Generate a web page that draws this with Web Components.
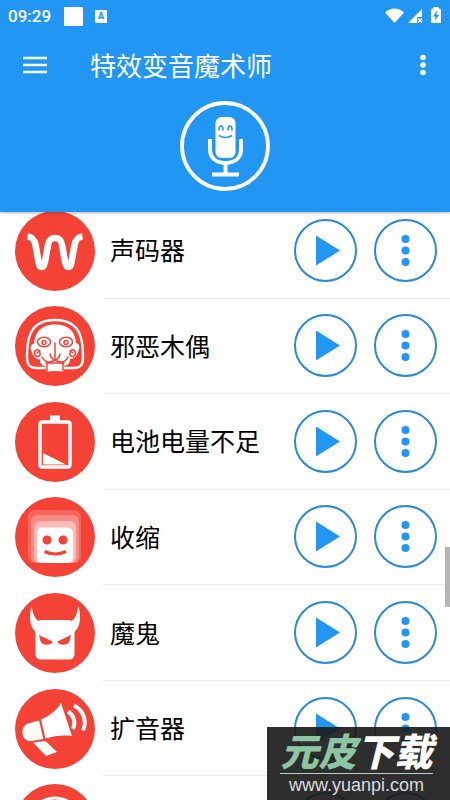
<!DOCTYPE html>
<html lang="zh-CN">
<head>
<meta charset="utf-8">
<meta name="viewport" content="width=device-width, initial-scale=1">
<title>特效变音魔术师</title>
<style>
  body {
    margin: 0;
    background: #fff;
    font-family: Roboto, "Noto Sans CJK SC", sans-serif;
    --blue: #2196f3;
    --ring: #2b88dc;
    --red: #f44336;
  }
</style>
</head>
<body>
<voice-app>
  <status-bar slot="header" time="09:29"></status-bar>
  <app-toolbar slot="header">特效变音魔术师</app-toolbar>
  <mic-hero slot="header"></mic-hero>
  <voice-row icon="vocoder">声码器</voice-row>
  <voice-row icon="puppet">邪恶木偶</voice-row>
  <voice-row icon="battery">电池电量不足</voice-row>
  <voice-row icon="shrink">收缩</voice-row>
  <voice-row icon="devil">魔鬼</voice-row>
  <voice-row icon="megaphone">扩音器</voice-row>
  <voice-row icon="ring"></voice-row>
  <site-badge slot="overlay" href="http://www.yuanpi.com">
    <span slot="lead">元皮</span><span slot="tail">下载</span>
    <span slot="url">www.yuanpi.com</span>
  </site-badge>
</voice-app>

<script>
const ICONS = {
  vocoder: `<path d="M12.500 25.500C18 26 19.500 29 20.500 34l2.500 14c1 6 1.500 8 3.500 8s3-2 4-8l2.500-14c1-5.500 3-7 7-7s6 1.500 7 7l2.500 14c1 6 2 8 4 8s2.500-2 3.500-8l2.500-14c1-5 2.500-8 8-8.500" fill="none" stroke="#fff" stroke-width="6.600"/>`,
  puppet: `<path d="M31 62H21c-6 0-9-4-9-10 0-7 0-13 2-20 3-12 12-18 26-18s23 6 26 18c2 7 2 13 2 20 0 6-3 10-9 10H49" fill="none" stroke="#fff" stroke-width="2.400"/>
    <path d="M40 18.500c-13 0-20 7-21 19-4 1-4 5-2 9 1 4 4 7 8 7 0 3 1 6 6 7v5.500q9-2 18 0V60c5-1 6-4 6-7 4 0 7-3 8-7 2-4 2-8-2-9-1-12-8-18.500-21-18.500z" fill="#fff"/>
    <g fill="none" stroke="var(--red)" stroke-width="1.500" stroke-linecap="round">
      <ellipse cx="29" cy="36" rx="6.500" ry="4.800"/><ellipse cx="51" cy="36" rx="6.500" ry="4.800"/>
      <circle cx="29" cy="36.500" r="2"/><circle cx="51" cy="36.500" r="2"/>
      <path d="M40 37v16M35 48c0 3 2 4 4 6M45 48c0 3-2 4-4 6M27 51c3 6 8 6 13 3 5 3 10 3 13-3M32 57v9M48 57v9M31 57h18"/>
      <path d="M25 45c-3-3-7 0-5 4 2 3 6 1 5-2-1-2-3-1-3 0M55 45c3-3 7 0 5 4-2 3-6 1-5-2 1-2 3-1 3 0"/>
    </g>`,
  battery: `<rect x="25" y="20" width="30" height="45" rx="2" fill="none" stroke="#fff" stroke-width="3.400"/>
    <path d="M35 19v-5.500h10V19zM28 51l23 11.500H28z" fill="#fff"/>`,
  shrink: `<g fill="#fff"><rect x="13" y="13" width="53" height="53" rx="7" opacity=".18"/>
    <rect x="16" y="18" width="48" height="48" rx="6" opacity=".25"/>
    <rect x="19" y="24" width="42" height="42" rx="6" opacity=".42"/>
    <rect x="22" y="30.500" width="36" height="35.500" rx="5"/></g>
    <g fill="var(--red)"><circle cx="32" cy="43" r="4.500"/><circle cx="48" cy="43" r="4.500"/></g>
    <path d="M29.500 54.500q10.500 5 21.500 0" fill="none" stroke="var(--red)" stroke-width="3.200"/>`,
  devil: `<path d="M16.500 13C14 23 14 33 20.500 39v22q0 5.500 5.500 5.500h28q5.500 0 5.500-5.500V39C66 33 66 23 63.500 13 62 21 60 26 56.500 28q-1-1-4-1h-25q-3 0-4 1C20 26 18 21 16.500 13z" fill="#fff"/>
    <path d="M24 42l13.500 6.500c-1 4-10 5-12-.500zM56 42l-13.500 6.500c1 4 10 5 12-.500z" fill="var(--red)"/>`,
  megaphone: `<path d="M24 31.500l4.300 18.500-12 2c-10 1-12-14-3.500-17.500zM26 30.500C34 27 40 23 46 14l11 33c-9-1-18 0-26.500 2.500zM18 53.500L30.500 52 42 63l-11 4z" fill="#fff"/>
    <path d="M53 22.500c6 4 8 11 5 17.500M59 16.500c10 5 13 16 9 25" fill="none" stroke="#fff" stroke-width="4"/>`,
  ring: `<circle cx="40" cy="40" r="26" fill="none" stroke="#fff" stroke-width="3"/>`
};

function define(name, markup, setup) {
  const template = document.createElement('template');
  template.innerHTML = markup;
  customElements.define(name, class extends HTMLElement {
    constructor() {
      super();
      this.attachShadow({ mode: 'open' }).append(template.content.cloneNode(true));
    }
    connectedCallback() { if (setup) setup(this, this.shadowRoot); }
  });
}

define('voice-app', `
  <style>
    :host { display: flex; flex-direction: column; height: 100vh; position: relative; overflow: hidden; }
    header { background: var(--blue); color: #fff; box-shadow: 0 1px 3px rgba(0,0,0,.3); z-index: 1; }
    main { flex: 1; min-height: 0; overflow: hidden; position: relative; }
    .list { display: grid; grid-auto-rows: 1fr; height: calc(100% + 81px); margin-top: -9px; }
    .thumb { position: absolute; right: 0; top: 57%; width: 5px; height: 60px; background: #b5b5b5; }
  </style>
  <header><slot name="header"></slot></header>
  <main><div class="list"><slot></slot></div><div class="thumb"></div></main>
  <slot name="overlay"></slot>`);

define('status-bar', `
  <style>
    :host { display: flex; align-items: center; height: 32px; padding: 0 8px; font: 500 17px/32px Roboto, sans-serif; }
    .time { margin-right: 13px; }
    .block { width: 19px; height: 19px; border-radius: 1px; background: #fff; margin-right: 12px; }
    .letter { width: 12px; height: 13px; border-radius: 1px; background: #fff; color: var(--blue); font: 900 9px/13px Roboto, sans-serif; text-align: center; }
    svg { display: block; margin-left: auto; }
  </style>
  <span class="time"></span><span class="block"></span><span class="letter">A</span>
  <svg width="58" height="20" viewBox="0 0 58 20" fill="#fff">
    <path d="M1 6.500C7 1 14 1 20 6.500L10.500 17z"/>
    <path d="M38 3v8h-5v6h-9z"/><path d="M34 12.500l4 4m0-4l-4 4" stroke="#fff" stroke-width="1.300"/>
    <path d="M49.500 2.500V1h5v1.500h1q1.500 0 1.500 1.500v13H47V4q0-1.500 1.500-1.500z"/>
    <path d="M53 4.500l-4 6h2.500L51 15l4-6h-2.500z" fill="var(--blue)"/>
  </svg>`,
  (host, root) => { root.querySelector('.time').textContent = host.getAttribute('time'); });

define('app-toolbar', `
  <style>
    :host { display: flex; align-items: center; height: 66px; padding: 0 15px; }
    button { border: 0; padding: 0; background: none; color: inherit; width: 40px; height: 40px; display: grid; place-items: center; }
    .more { width: 24px; }
    h1 { flex: 1; margin: 0 0 0 35px; padding-top: 3px; font-size: 26px; line-height: 36px; font-weight: 400; }
    svg { display: block; }
  </style>
  <button aria-label="菜单"><svg width="24" height="18" viewBox="0 0 24 18"><path d="M0 2h24M0 9h24M0 16h24" stroke="#fff" stroke-width="2.400"/></svg></button>
  <h1><slot></slot></h1>
  <button class="more" aria-label="更多"><svg width="6" height="22" viewBox="0 0 6 22" fill="#fff"><circle cx="3" cy="3.500" r="2.800"/><circle cx="3" cy="11" r="2.800"/><circle cx="3" cy="18.500" r="2.800"/></svg></button>`);

define('mic-hero', `
  <style>
    :host { display: flex; justify-content: center; padding: 3px 0 21px; }
    button { border: 0; padding: 0; background: none; border-radius: 50%; }
    svg { display: block; }
  </style>
  <button aria-label="录音"><svg width="90" height="90" viewBox="0 0 90 90" fill="none" stroke="#fff">
    <circle cx="45" cy="45" r="43" stroke-width="3.800"/>
    <rect x="35.500" y="16" width="20" height="41" rx="6" fill="#fff" stroke="none"/>
    <path d="M30 38v10c0 9 6 14 15.500 14S61 57 61 48V38M45.500 62v11" stroke-width="4"/>
    <path d="M32 73.500h27" stroke-width="4"/>
    <path d="M39 29.500c0-6 4-6 4 0M48 29.500c0-6 4-6 4 0M39 34.500q6.500 4 13 0" stroke="var(--blue)" stroke-width="1.600"/>
  </svg></button>`);

define('voice-row', `
  <style>
    :host { display: flex; align-items: stretch; padding-left: 15px; min-height: 0; }
    .avatar { align-self: center; display: block; width: 80px; height: 80px; flex: none; margin-right: 8px; }
    .body { flex: 1; display: flex; align-items: center; gap: 17px; padding: 0 13px 0 7px; border-bottom: 1px solid #ebebeb; color: #000; }
    .name { flex: 1; padding-top: 4px; font-size: 25px; line-height: 36px; }
    button { width: 63px; height: 63px; box-sizing: border-box; margin: 0; padding: 0; border: 2px solid var(--ring); border-radius: 50%; background: none; display: grid; place-items: center; }
    button svg { display: block; fill: var(--blue); }
  </style>
  <svg class="avatar" viewBox="0 0 80 80" aria-hidden="true"><circle cx="40" cy="40" r="40" fill="var(--red)"/><g class="glyph"></g></svg>
  <div class="body">
    <span class="name"><slot></slot></span>
    <button aria-label="播放"><svg width="29" height="31" viewBox="0 0 29 31"><path d="M5 0.500l24 15-24 15z"/></svg></button>
    <button aria-label="更多选项"><svg width="9" height="31" viewBox="0 0 9 31"><circle cx="4.500" cy="4" r="4"/><circle cx="4.500" cy="15.500" r="4"/><circle cx="4.500" cy="27" r="4"/></svg></button>
  </div>`,
  (host, root) => { root.querySelector('.glyph').innerHTML = ICONS[host.getAttribute('icon')]; });

define('site-badge', `
  <style>
    :host { position: absolute; right: 0; bottom: 0; z-index: 2; }
    a { display: block; box-sizing: border-box; width: 183px; height: 73px; padding: 6px 17px 0 13px; background: rgba(25,25,25,.91); color: #dcdcdc; text-decoration: none; text-align: center; }
    .name { display: block; font: italic 900 38px/40px "Liberation Sans", "Noto Sans CJK SC", sans-serif; color: #fff; white-space: nowrap; border-bottom: 1px solid #b5d3c0; }
    .lead { color: #8cc5a2; }
    .url { display: block; padding-top: 1px; font: 18px/20px "Liberation Sans", sans-serif; }
  </style>
  <a><span class="name"><span class="lead"><slot name="lead"></slot></span><slot name="tail"></slot></span><span class="url"><slot name="url"></slot></span></a>`,
  (host, root) => { root.querySelector('a').href = host.getAttribute('href'); });
</script>
</body>
</html>
